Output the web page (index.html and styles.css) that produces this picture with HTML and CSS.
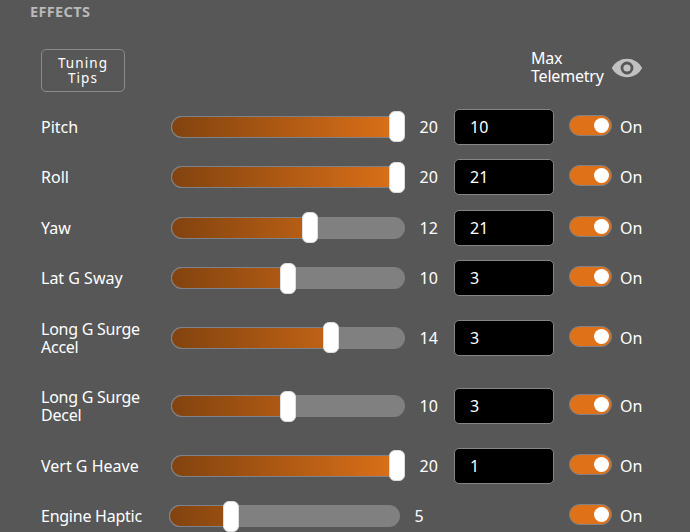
FILE: index.html
```html
<!DOCTYPE html>
<html lang="en">
<head>
<meta charset="utf-8">
<title>Effects</title>
<link rel="stylesheet" href="styles.css">
</head>
<body>
<main class="panel">
  <h2 class="title">EFFECTS</h2>
  <header class="toolbar">
    <button class="tips">Tuning<br>Tips</button>
    <div class="telemetry">
      <span>Max<br>Telemetry</span>
      <svg class="eye" viewBox="0 0 32 20"><path fill="#c1c1c1" fill-rule="evenodd" d="M.8 10C4 4.200 9.600.8 16 .8S28 4.200 31.200 10C28 15.800 22.400 19.200 16 19.200S4 15.800.8 10ZM16 3.600a6.400 6.400 0 1 0 0 12.800a6.400 6.400 0 1 0 0-12.800Z"/><circle cx="16" cy="10" r="3.600" fill="#c1c1c1"/></svg>
    </div>
  </header>
  <div class="row">
    <span class="label">Pitch</span>
    <div class="slider" style="--v:1"><i class="fill"></i><i class="thumb"></i></div>
    <span class="value">20</span><div class="field">10</div>
    <i class="toggle"></i><span class="state">On</span>
  </div>
  <div class="row">
    <span class="label">Roll</span>
    <div class="slider" style="--v:1"><i class="fill"></i><i class="thumb"></i></div>
    <span class="value">20</span><div class="field">21</div>
    <i class="toggle"></i><span class="state">On</span>
  </div>
  <div class="row">
    <span class="label">Yaw</span>
    <div class="slider" style="--v:.6"><i class="fill"></i><i class="thumb"></i></div>
    <span class="value">12</span><div class="field">21</div>
    <i class="toggle"></i><span class="state">On</span>
  </div>
  <div class="row">
    <span class="label">Lat G Sway</span>
    <div class="slider" style="--v:.5"><i class="fill"></i><i class="thumb"></i></div>
    <span class="value">10</span><div class="field">3</div>
    <i class="toggle"></i><span class="state">On</span>
  </div>
  <div class="row tall">
    <span class="label snug">Long G Surge<br>Accel</span>
    <div class="slider" style="--v:.7"><i class="fill"></i><i class="thumb"></i></div>
    <span class="value">14</span><div class="field">3</div>
    <i class="toggle"></i><span class="state">On</span>
  </div>
  <div class="row tall">
    <span class="label snug">Long G Surge<br>Decel</span>
    <div class="slider" style="--v:.5"><i class="fill"></i><i class="thumb"></i></div>
    <span class="value">10</span><div class="field">3</div>
    <i class="toggle"></i><span class="state">On</span>
  </div>
  <div class="row">
    <span class="label">Vert G Heave</span>
    <div class="slider" style="--v:1"><i class="fill"></i><i class="thumb"></i></div>
    <span class="value">20</span><div class="field">1</div>
    <i class="toggle"></i><span class="state">On</span>
  </div>
  <div class="row haptic">
    <span class="label snug">Engine Haptic</span>
    <div class="slider" style="--v:.25"><i class="fill"></i><i class="thumb"></i></div>
    <span class="value">5</span><span></span>
    <i class="toggle"></i><span class="state">On</span>
  </div>
</main>
</body>
</html>
```
FILE: styles.css
```css
* { box-sizing: border-box; }
body {
  margin: 0;
  height: 532px;
  overflow: hidden;
  background: #575757;
  color: #fff;
  font: 16px/18px "Noto Sans", sans-serif;
}
.panel { padding: 0 41px; }
.title {
  margin: 0 0 0 -11px;
  padding-top: 2px;
  height: 49px;
  font-size: 14.5px;
  line-height: 18px;
  font-weight: 700;
  letter-spacing: .35px;
  color: #b9b9b9;
}
.toolbar {
  display: flex;
  justify-content: space-between;
  align-items: flex-start;
  height: 52.3px;
}
.tips {
  width: 84px;
  height: 43px;
  padding: 1px 0 0;
  border: 1px solid #8b8b8b;
  border-radius: 5px;
  background: none;
  color: #fff;
  font: 13.5px/15.500px "Noto Sans", sans-serif;
  letter-spacing: 1.100px;
}
.telemetry { display: flex; gap: 6px; width: 118px; }
.telemetry span { width: 74px; letter-spacing: -.2px; }
.eye { width: 32px; height: 20px; margin-top: 9px; flex: none; }
.row {
  display: grid;
  grid-template-columns: 130px 233.5px 49.5px 100px 42px 40px;
  align-items: center;
  height: 50.5px;
}
.tall { height: 68.5px; }
.haptic { grid-template-columns: 128px 230.5px 54.5px 100px 42px 40px; }
.label { white-space: nowrap; }
.snug { letter-spacing: -.25px; }
.slider {
  display: grid;
  grid-template-rows: 22px;
  align-items: center;
  height: 22px;
  border-radius: 11px;
  background: #808080;
}
.slider > i { grid-area: 1 / 1; }
.fill {
  width: calc((100% - 16px) * var(--v) + 8px);
  height: 22px;
  border: 1px solid #7e8288;
  border-right: 0;
  border-radius: 11px 0 0 11px;
  background: linear-gradient(90deg, #82430f, #df7219) 0 0 / 234px 100% no-repeat;
}
.thumb {
  width: 16px;
  height: 31px;
  margin-left: calc((100% - 16px) * var(--v));
  border: 1px solid #ddd;
  border-radius: 6px;
  background: #fff;
}
.value { padding-left: 15px; }
.field {
  height: 36px;
  padding-left: 15px;
  line-height: 34px;
  border: 1px solid #858585;
  border-radius: 5px;
  background: #000;
}
.toggle {
  display: flex;
  justify-content: flex-end;
  align-items: center;
  width: 43px;
  height: 21px;
  margin: -3px 0 0 15px;
  padding-right: 2px;
  border: 1px solid #7e8288;
  border-radius: 10.5px;
  background: #df7219;
}
.toggle::after {
  content: "";
  width: 15px;
  height: 15px;
  border-radius: 50%;
  background: #fff;
}
.state { padding-left: 24px; }
```
